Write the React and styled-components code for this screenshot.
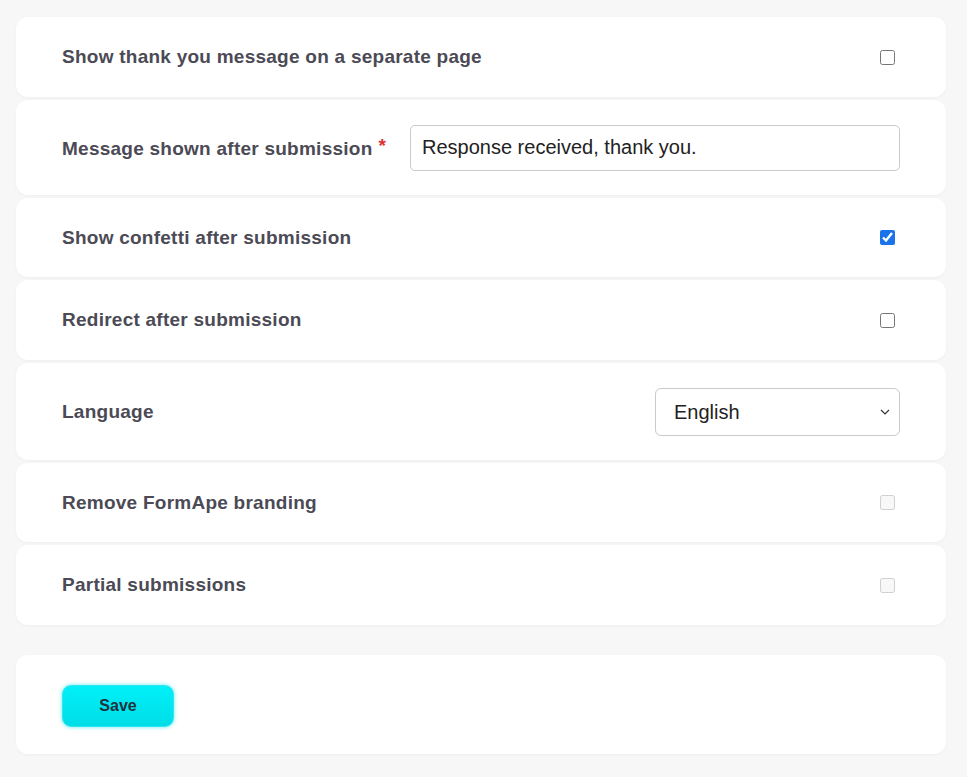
import React, { useState } from "react";
import styled, { createGlobalStyle } from "styled-components";

const Global = createGlobalStyle`
  body {
    margin: 0;
    background: #f7f7f8;
    font-family: "Liberation Sans", Arial, sans-serif;
  }
`;

const Page = styled.div`
  padding: 17px 21px 20px 16px;
  display: flex;
  flex-direction: column;
  gap: 3px;
`;

const Card = styled.div`
  background: #fff;
  border-radius: 12px;
  box-shadow: 0 1px 3px rgba(0, 0, 0, 0.04);
  min-height: ${(p) => p.h}px;
  box-sizing: border-box;
  padding: 0 50px 0 46px;
  display: flex;
  align-items: center;
  justify-content: space-between;
  gap: 20px;
`;

const SaveCard = styled(Card)`
  margin-top: 27px;
  justify-content: flex-start;
  padding-top: 2px;
`;

const Label = styled.label`
  font-size: 19px;
  font-weight: 700;
  letter-spacing: 0.25px;
  color: #4b4a55;
  white-space: nowrap;
`;

const Req = styled.span`
  color: #d33;
  margin-left: 6px;
  vertical-align: 3px;
`;

const Check = styled.input.attrs({ type: "checkbox" })`
  width: 15px;
  height: 15px;
  margin: 0 1px 0 0;
  accent-color: #1a73e8;
`;

const TextInput = styled.input`
  flex: 1;
  max-width: 490px;
  height: 46px;
  box-sizing: border-box;
  border: 1px solid #c9c9cf;
  border-radius: 5px;
  padding: 0 11px;
  font: 20px "Liberation Sans", Arial, sans-serif;
  color: #222;
  margin-right: -4px;
`;

const Select = styled.select`
  appearance: none;
  width: 245px;
  height: 48px;
  border: 1px solid #c9c9cf;
  border-radius: 6px;
  padding: 0 18px;
  font: 20px "Liberation Sans", Arial, sans-serif;
  color: #222;
  background: #fff url("data:image/svg+xml,%3Csvg xmlns='http://www.w3.org/2000/svg' width='10' height='6'%3E%3Cpath d='M1 1l4 4 4-4' fill='none' stroke='%23333' stroke-width='1.2'/%3E%3C/svg%3E") no-repeat right 9px center;
  margin-right: -4px;
`;

const SaveButton = styled.button`
  width: 112px;
  height: 42px;
  border: 1px solid #2ee6ef;
  border-radius: 9px;
  background: linear-gradient(#00f0f8, #00dde6);
  box-shadow: 0 0 4px rgba(0, 220, 230, 0.6);
  font: 700 16px "Liberation Sans", Arial, sans-serif;
  color: #1d3340;
`;

export default function App() {
  const [msg, setMsg] = useState("Response received, thank you.");
  return (
    <>
      <Global />
      <Page>
        <Card h={80}>
          <Label>Show thank you message on a separate page</Label>
          <Check />
        </Card>
        <Card h={95}>
          <Label>
            Message shown after submission<Req>*</Req>
          </Label>
          <TextInput value={msg} onChange={(e) => setMsg(e.target.value)} />
        </Card>
        <Card h={79}>
          <Label>Show confetti after submission</Label>
          <Check defaultChecked />
        </Card>
        <Card h={80}>
          <Label>Redirect after submission</Label>
          <Check />
        </Card>
        <Card h={97}>
          <Label>Language</Label>
          <Select defaultValue="en">
            <option value="en">English</option>
          </Select>
        </Card>
        <Card h={79}>
          <Label>Remove FormApe branding</Label>
          <Check disabled />
        </Card>
        <Card h={80}>
          <Label>Partial submissions</Label>
          <Check disabled />
        </Card>
        <SaveCard h={99}>
          <SaveButton>Save</SaveButton>
        </SaveCard>
      </Page>
    </>
  );
}
